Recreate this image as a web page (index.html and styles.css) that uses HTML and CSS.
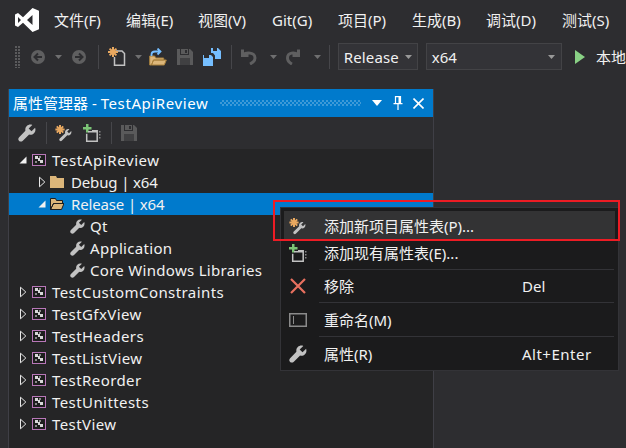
FILE: index.html
```html
<!DOCTYPE html>
<html lang="zh-CN">
<head>
<meta charset="utf-8">
<title>属性管理器 - TestApiReview</title>
<link rel="stylesheet" href="styles.css">
</head>
<body>
<svg class="defs" width="0" height="0">
  <defs>
    <symbol id="wrench" viewBox="0 0 16 16"><path fill="currentColor" d="M11 .5C8.600.5 6.500 2.500 6.500 5c0 .4 0 .8.100 1.100L1 11.700c-1 1-1 2.400 0 3.300.9.900 2.300.9 3.300-.1L9.900 9.300c.4.100.7.200 1.100.200 2.500 0 4.500-2 4.500-4.500 0-.6-.1-1.200-.3-1.700L12 6.500 9.500 4l3.200-3.200c-.5-.2-1.100-.3-1.700-.3z"/></symbol>
    <symbol id="wand" viewBox="0 0 18 18">
      <path fill="#c2c2c2" d="M13.200 5c-1.800 0-3.200 1.400-3.200 3.200 0 .4.100.7.200 1L4.800 14.500c-.7.700-.7 1.600 0 2.200.6.600 1.500.6 2.200-.1l5.300-5.300c.3.100.6.100.9.100 1.800 0 3.200-1.400 3.200-3.200 0-.4 0-.8-.2-1.100l-2.200 2.200-1.800-1.800 2.200-2.200c-.3-.2-.8-.3-1.200-.3z"/>
      <path fill="#e8a860" d="M4 1h2v2.200l1.600-1.500 1.300 1.300L7.400 4.500h2.200v2H7.400l1.500 1.500-1.300 1.300L6 7.800V10H4V7.800L2.400 9.300 1.100 8l1.500-1.500H.4v-2h2.200L1.100 3l1.300-1.300L4 3.200z"/>
    </symbol>
    <symbol id="addsheet" viewBox="0 0 18 18">
      <path fill="#7cc576" d="M3 0h2.500v3H8.500v2.500H5.500v3H3v-3H0V3h3z"/>
      <path fill="none" stroke="#c2c2c2" stroke-width="1.500" d="M3.700 9.700v7.500h10.500V6.700H9"/>
      <path fill="#c2c2c2" d="M5 7h9v1.500H5z"/>
      <path fill="#8a8a8a" d="M16 7h1.500v1.500H16zM16 10h1.500v1.500H16zM16 13h1.500v1.500H16z"/>
    </symbol>
    <symbol id="save" viewBox="0 0 16 16">
      <path fill="#5a5a5b" d="M0 0h13l3 3v13H0z"/>
      <path fill="#2d2d30" d="M3 0h1v5h7V0h1v6H3zM8 1h2v3H8z"/>
      <path fill="#404042" d="M3 9h10v7H3z"/>
    </symbol>
    <symbol id="project" viewBox="0 0 14 12">
      <rect x=".5" y=".5" width="13" height="11" fill="#1e1e1e" stroke="#b877b8"/>
      <path fill="#d8d8d8" d="M3 2h3v2h2v2h3v3H8V7H6V5H3z"/>
      <path fill="#8a8a8a" d="M7 2h2v2H7zM3 7h2v2H3z"/>
    </symbol>
    <symbol id="tri-open" viewBox="0 0 8 12"><path fill="#252526" stroke="#e8e8e8" d="M1.500 1.200v9.600L6.800 6z"/></symbol>
    <symbol id="tri-down" viewBox="0 0 8 8"><path fill="#f1f1f1" d="M7.500.5v7H.5z"/></symbol>
    <symbol id="caret" viewBox="0 0 7 4"><path fill="currentColor" d="M0 0h7L3.500 4z"/></symbol>
  </defs>
</svg>

<div class="app">
  <header class="menubar">
    <svg class="logo" viewBox="0 0 24 24"><path fill="#fff" fill-rule="evenodd" d="M17.500 0 24 2.800v18.400L17.500 24 8 14.800 3 19 0 17.500v-11L3 5l5 4.200zM17.500 7 12 12l5.500 5zM3 9v6l3-3z"/></svg>
    <nav class="menus">
      <span class="menu-f">文件(F)</span>
      <span class="menu-e">编辑(E)</span>
      <span class="menu-v">视图(V)</span>
      <span class="menu-g">Git(G)</span>
      <span class="menu-p">项目(P)</span>
      <span class="menu-b">生成(B)</span>
      <span class="menu-d">调试(D)</span>
      <span class="menu-s">测试(S)</span>
    </nav>
  </header>

  <div class="toolbar">
    <span class="grip"></span>
    <svg class="tb back" viewBox="0 0 14 14"><circle cx="7" cy="7" r="7" fill="#5f5f60"/><path fill="none" stroke="#2d2d30" stroke-width="2" d="M11 7H4M7 3.500 3.500 7 7 10.500"/></svg>
    <svg class="tb caret c1"><use href="#caret"/></svg>
    <svg class="tb fwd" viewBox="0 0 14 14"><circle cx="7" cy="7" r="7" fill="#5f5f60"/><path fill="none" stroke="#2d2d30" stroke-width="2" d="M3 7h7M7 3.500 10.500 7 7 10.500"/></svg>
    <span class="tsep s1"></span>
    <svg class="tb newp" viewBox="0 0 19 19">
      <path fill="none" stroke="#c2c2c2" stroke-width="1.500" d="M8 4h6l2.500 2.500v11.700H6.500V10"/>
      <path fill="#e8a860" d="M4 0h2v2.500L7.800 1l1.300 1.300L7.500 4H10v2H7.500l1.600 1.700L7.800 9 6 7.500V10H4V7.500L2.200 9 .9 7.700 2.500 6H0V4h2.500L.9 2.300 2.200 1 4 2.500z"/>
    </svg>
    <svg class="tb caret c2"><use href="#caret"/></svg>
    <svg class="tb open" viewBox="0 0 18 18">
      <path fill="#dcb67a" stroke="#a8803c" d="M.7 17V8h5l1 2h8v2H4.500L2.500 17zM2.500 17h12.800l2-5H4.500z"/>
      <path fill="none" stroke="#75beff" stroke-width="1.800" d="M2.500 8V6.500C2.500 4.500 4 3.500 6 3.500h5M8.500.5l3 3-3 3"/>
    </svg>
    <svg class="tb save"><use href="#save"/></svg>
    <svg class="tb saveall" viewBox="0 0 18 18">
      <path fill="#75beff" fill-rule="evenodd" d="M8 0h2v3h4V0h1l3 3v8h-6V7.500L10 5H8zM0 7h1v3h5V7h2l2 2v9H0z"/>
    </svg>
    <span class="tsep s2"></span>
    <svg class="tb undo" viewBox="0 0 16 17"><path fill="none" stroke="#5f5f60" stroke-width="3" d="M1.500 1.500v6h6M2 7c3-3 12-3 12 3 0 3-3 5-5 6"/></svg>
    <svg class="tb caret c3"><use href="#caret"/></svg>
    <svg class="tb redo" viewBox="0 0 14 17"><path fill="none" stroke="#5f5f60" stroke-width="3" d="M12.500 1.500v6h-6M12 7C9 4 1.500 4 1.500 10c0 3 2.500 5 4.500 6"/></svg>
    <svg class="tb caret c4"><use href="#caret"/></svg>
    <span class="tsep s3"></span>
    <div class="combo combo-config"><span class="combo-text">Release</span><svg class="caret combo-caret"><use href="#caret"/></svg></div>
    <div class="combo combo-platform"><span>x64</span><svg class="caret combo-caret"><use href="#caret"/></svg></div>
    <svg class="play" viewBox="0 0 10 14"><path fill="#89d185" d="M0 0l10 7-10 7z"/></svg>
    <span class="run-label">本地</span>
  </div>

  <section class="panel">
    <div class="titlebar">
      <span class="title">属性管理器 - <span class="wide">TestApiReview</span></span>
      <span class="dots"></span>
      <svg class="tcaret" viewBox="0 0 10 6"><path fill="#fff" d="M0 0h10L5 6z"/></svg>
      <svg class="pin" viewBox="0 0 10 14"><path fill="none" stroke="#fff" stroke-width="1.200" d="M2.500.600h5v7h-5zM.5 7.600h9M5 8v6"/><path fill="#fff" d="M5.500 1h2v6h-2z"/></svg>
      <svg class="close" viewBox="0 0 11 11"><path fill="none" stroke="#fff" stroke-width="1.600" d="M.5.500l10 10M10.500.500l-10 10"/></svg>
    </div>
    <div class="panel-tools">
      <svg class="pt-wrench"><use href="#wrench"/></svg>
      <span class="tsep"></span>
      <svg class="pt-wand"><use href="#wand"/></svg>
      <svg class="pt-add"><use href="#addsheet"/></svg>
      <span class="tsep"></span>
      <svg class="pt-save"><use href="#save"/></svg>
    </div>
    <ul class="tree">
      <li class="row lvl0"><svg class="tri-d"><use href="#tri-down"/></svg><svg class="proj"><use href="#project"/></svg><span class="wide">TestApiReview</span></li>
      <li class="row lvl1"><svg class="tri"><use href="#tri-open"/></svg><svg class="folder" viewBox="0 0 14 12"><path fill="#dcb67a" d="M0 0h6l1 2h7v10H0z"/></svg><span>Debug | x64</span></li>
      <li class="row lvl1 selected"><svg class="tri-d"><use href="#tri-down"/></svg><svg class="folder" viewBox="0 0 14 12"><path fill="#dcb67a" stroke="#1e1e1e" d="M.5.500h5l1 2h6v3h-9l-3 6zM.5 11.500h11l2.500-6H3.500z"/></svg><span>Release | x64</span></li>
      <li class="row lvl2"><svg class="wr"><use href="#wrench"/></svg><span>Qt</span></li>
      <li class="row lvl2"><svg class="wr"><use href="#wrench"/></svg><span>Application</span></li>
      <li class="row lvl2"><svg class="wr"><use href="#wrench"/></svg><span>Core Windows Libraries</span></li>
      <li class="row lvl0"><svg class="tri"><use href="#tri-open"/></svg><svg class="proj"><use href="#project"/></svg><span>TestCustomConstraints</span></li>
      <li class="row lvl0"><svg class="tri"><use href="#tri-open"/></svg><svg class="proj"><use href="#project"/></svg><span>TestGfxView</span></li>
      <li class="row lvl0"><svg class="tri"><use href="#tri-open"/></svg><svg class="proj"><use href="#project"/></svg><span>TestHeaders</span></li>
      <li class="row lvl0"><svg class="tri"><use href="#tri-open"/></svg><svg class="proj"><use href="#project"/></svg><span>TestListView</span></li>
      <li class="row lvl0"><svg class="tri"><use href="#tri-open"/></svg><svg class="proj"><use href="#project"/></svg><span>TestReorder</span></li>
      <li class="row lvl0"><svg class="tri"><use href="#tri-open"/></svg><svg class="proj"><use href="#project"/></svg><span>TestUnittests</span></li>
      <li class="row lvl0"><svg class="tri"><use href="#tri-open"/></svg><svg class="proj"><use href="#project"/></svg><span>TestView</span></li>
    </ul>
  </section>

  <div class="ctx">
    <div class="item first hot"><svg class="ico"><use href="#wand"/></svg><span class="label">添加新项目属性表(P)...</span></div>
    <div class="item second"><svg class="ico"><use href="#addsheet"/></svg><span class="label">添加现有属性表(E)...</span></div>
    <div class="sep"></div>
    <div class="item third"><svg class="ico" viewBox="0 0 18 18"><path fill="none" stroke="#e8705f" stroke-width="2.200" d="M2 2l14 14M16 2 2 16"/></svg><span class="label">移除</span><span class="key">Del</span></div>
    <div class="sep"></div>
    <div class="item"><svg class="ico" viewBox="0 0 18 14"><rect x=".75" y=".75" width="16.500" height="12.500" fill="none" stroke="#8a8a8a" stroke-width="1.500"/><path fill="#8a8a8a" d="M4 3h1v8H4z"/></svg><span class="label">重命名(M)</span></div>
    <div class="sep"></div>
    <div class="item"><svg class="ico"><use href="#wrench"/></svg><span class="label">属性(R)</span><span class="key alt">Alt+Enter</span></div>
  </div>
  <div class="callout"></div>
</div>
</body>
</html>
```

FILE: styles.css
```css
* { box-sizing: border-box; }
html, body { margin: 0; padding: 0; }
body {
  width: 626px;
  height: 448px;
  overflow: hidden;
  background: #2d2d30;
  color: #f1f1f1;
  font: 15px/20px "Noto Sans", "Noto Sans CJK SC", sans-serif;
}
svg { display: block; flex: none; }
.defs { position: absolute; }
.app { position: relative; width: 626px; height: 448px; overflow: hidden; }
.wide { letter-spacing: .6px; }

/* menu bar */
.menubar { display: flex; align-items: center; height: 40px; padding-left: 15px; }
.logo { width: 24px; height: 24px; }
.menus { display: flex; margin-left: 15px; white-space: nowrap; }
.menus span { display: block; }
.menu-f { width: 72px; }
.menu-e { width: 72px; }
.menu-v { width: 74px; }
.menu-g { width: 66px; }
.menu-p { width: 74px; }
.menu-b { width: 74px; }
.menu-d { width: 76px; }

/* toolbar */
.toolbar { display: flex; align-items: center; height: 27px; margin-top: 3px; padding-left: 15px; white-space: nowrap; }
.grip {
  width: 6px; height: 22px;
  background: radial-gradient(circle at 1px 1px, #5a5a5c 1px, transparent 1px) 0 0 / 3px 3px;
}
.caret { width: 7px; height: 4px; color: #8a8a8a; }
.tb.caret { color: #6f6f70; }
.tsep { width: 1px; height: 24px; background: #46464a; }
.back { width: 14px; height: 14px; margin-left: 10px; }
.c1 { margin-left: 10px; }
.fwd { width: 14px; height: 14px; margin-left: 10px; }
.s1 { margin-left: 12px; }
.newp { width: 19px; height: 19px; margin-left: 9px; }
.c2 { margin-left: 8px; }
.open { width: 18px; height: 18px; margin-left: 7px; }
.save { width: 16px; height: 16px; margin-left: 10px; }
.saveall { width: 18px; height: 18px; margin-left: 10px; }
.s2 { margin-left: 10px; }
.undo { width: 16px; height: 17px; margin-left: 9px; }
.c3 { margin-left: 13px; }
.redo { width: 14px; height: 17px; margin-left: 9px; }
.c4 { margin-left: 14px; }
.s3 { margin-left: 8px; }
.combo {
  display: flex; align-items: center; justify-content: space-between;
  height: 27px; padding: 0 6px 0 5px;
  background: #333337; border: 1px solid #434346;
}
.combo-text { letter-spacing: .1px; }
.combo-caret { color: #999; }
.combo-config { width: 81px; margin-left: 8px; padding-right: 5px; }
.combo-platform { width: 138px; margin-left: 8px; }
.play { width: 10px; height: 14px; margin-left: 13px; }
.run-label { margin-left: 11px; }

/* property manager panel */
.panel { width: 426px; height: 359px; margin: 19px 0 0 8px; border-left: 1px solid #3f3f46; border-right: 1px solid #3f3f46; background: #252526; }
.titlebar { display: flex; align-items: center; height: 28px; padding-left: 4px; background: #007acc; color: #fff; white-space: nowrap; }
.title { width: 207px; }
.dots {
  width: 141px; height: 6px;
  background: repeating-conic-gradient(#3d9ad8 0 25%, #007acc 0 50%) 0 0 / 4px 4px;
}
.tcaret { width: 10px; height: 6px; margin-left: 11px; }
.pin { width: 10px; height: 14px; margin-left: 11px; }
.close { width: 11px; height: 11px; margin-left: 10px; }
.panel-tools { display: flex; align-items: center; height: 32px; padding-left: 9px; background: #2d2d30; }
.panel-tools .tsep { height: 22px; }
.pt-wrench { width: 18px; height: 18px; color: #c2c2c2; }
.panel-tools .tsep:nth-of-type(1) { margin-left: 10px; }
.pt-wand { width: 18px; height: 18px; margin-left: 8px; }
.pt-add { width: 18px; height: 18px; margin-left: 10px; }
.panel-tools .pt-add + .tsep { margin-left: 10px; }
.pt-save { width: 16px; height: 16px; margin-left: 9px; }

/* tree */
.tree { margin: 0; padding: 0; list-style: none; }
.row { display: flex; align-items: center; height: 22px; white-space: nowrap; }
.row.selected { background: #007acc; }
.lvl0 { padding-left: 10px; letter-spacing: .42px; }
.lvl1 { padding-left: 29px; letter-spacing: -.15px; }
.lvl2 { padding-left: 61px; letter-spacing: .3px; }
.lvl0 .wide { letter-spacing: .6px; }
.tri { width: 8px; height: 12px; }
.tri-d { width: 8px; height: 8px; }
.proj { width: 14px; height: 12px; margin-left: 5px; margin-right: 6px; }
.folder { width: 14px; height: 12px; margin-left: 4px; margin-right: 7px; }
.wr { width: 15px; height: 15px; margin-right: 5px; color: #c2c2c2; }

/* context menu */
.ctx {
  position: absolute; left: 280px; top: 207px; width: 339px; height: 164px;
  padding: 3px;
  background: #1b1b1c; border: 1px solid #333337;
}
.item { display: flex; align-items: center; height: 33px; position: relative; padding-left: 40px; }
.item.first { height: 30px; }
.item.second { height: 23px; margin-bottom: 5px; }
.item.third { height: 32px; }
.item.hot { background: #333334; }
.ico { position: absolute; left: 5px; top: 50%; width: 18px; height: 18px; margin-top: -9px; color: #c2c2c2; }
.label { width: 198px; white-space: nowrap; }
.key.alt { letter-spacing: .5px; }
.sep { height: 1px; margin-left: 35px; margin-right: 1px; background: #333337; }
.callout { position: absolute; left: 273px; top: 200px; width: 347px; height: 41px; border: 2px solid #ed1c24; }
```
